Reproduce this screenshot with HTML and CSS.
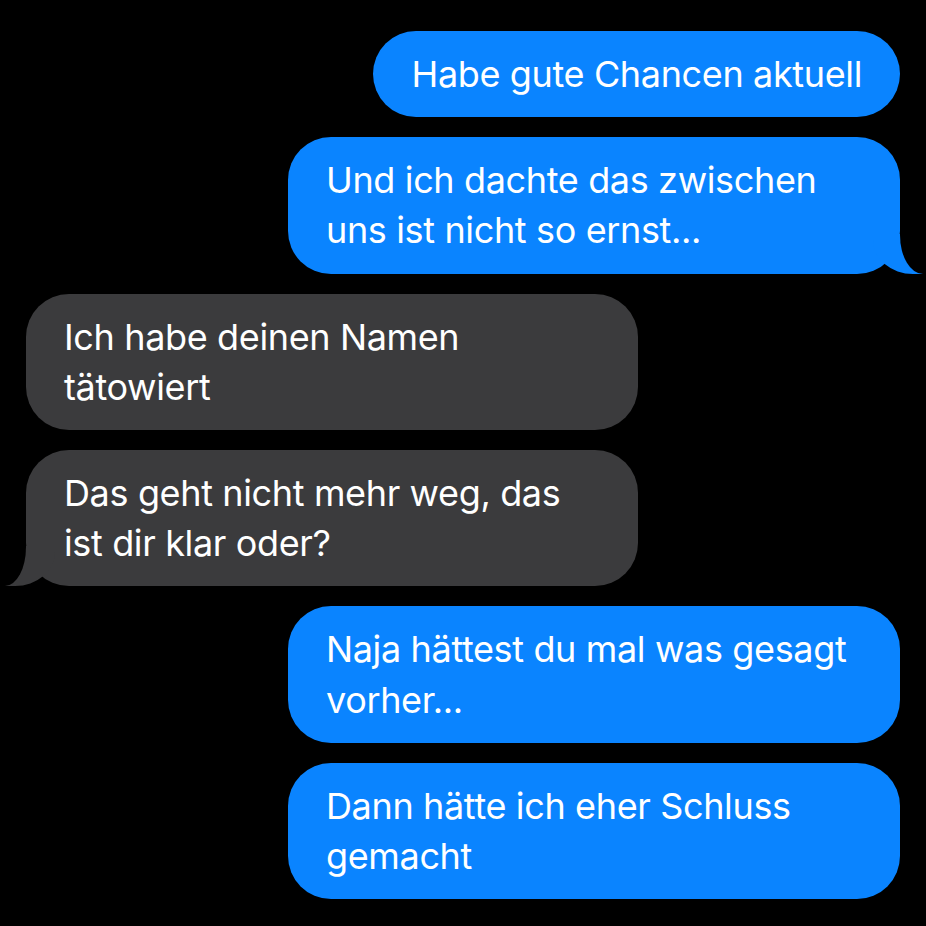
FILE: index.html
```html
<!DOCTYPE html>
<html lang="de">
<head>
    <meta charset="UTF-8">
    <meta name="viewport" content="width=device-width, initial-scale=1.0">
    <title>Chat</title>
    <link rel="stylesheet" href="styles.css">
</head>
<body>

<div class="chat">
    <div class="bubble sent">Habe gute Chancen aktuell</div>
    <div class="bubble sent wide tail">Und ich dachte das zwischen<br>uns ist nicht so ernst...</div>
    <div class="bubble received wide">Ich habe deinen Namen<br>tätowiert</div>
    <div class="bubble received wide tail">Das geht nicht mehr weg, das<br>ist dir klar oder?</div>
    <div class="bubble sent wide">Naja hättest du mal was gesagt<br>vorher...</div>
    <div class="bubble sent wide">Dann hätte ich eher Schluss<br>gemacht</div>
</div>

</body>
</html>
```

FILE: styles.css
```css
html, body {
    margin: 0;
    padding: 0;
    background: #000;
    overflow: hidden;
}
.chat {
    display: flex;
    flex-direction: column;
    gap: 20px;
    padding: 31px 26px;
    font-family: 'Inter', 'Noto Sans', sans-serif;
    font-size: 36px;
    line-height: 50.2px;
    letter-spacing: -0.36px;
    color: #fff;
}
.bubble {
    position: relative;
    padding: 18px 38px;
    border-radius: 43px;
}
.wide {
    width: 612px;
    box-sizing: border-box;
}
.sent {
    align-self: flex-end;
    background-color: #0a84ff;
}
.received {
    align-self: flex-start;
    background-color: #3b3b3d;
}

/* tails */
.tail::before,
.tail::after {
    content: "";
    position: absolute;
    bottom: 0;
    height: 40px;
}
.sent.tail::before {
    right: -23px;
    width: 50px;
    background-color: #0a84ff;
    border-bottom-left-radius: 40px 34px;
}
.sent.tail::after {
    right: -26px;
    width: 26px;
    background-color: #000;
    border-bottom-left-radius: 23px 39px;
}
.received.tail::before {
    left: -21px;
    width: 50px;
    background-color: #3b3b3d;
    border-bottom-right-radius: 40px 34px;
}
.received.tail::after {
    left: -26px;
    width: 26px;
    background-color: #000;
    border-bottom-right-radius: 21px 39px;
}
```
